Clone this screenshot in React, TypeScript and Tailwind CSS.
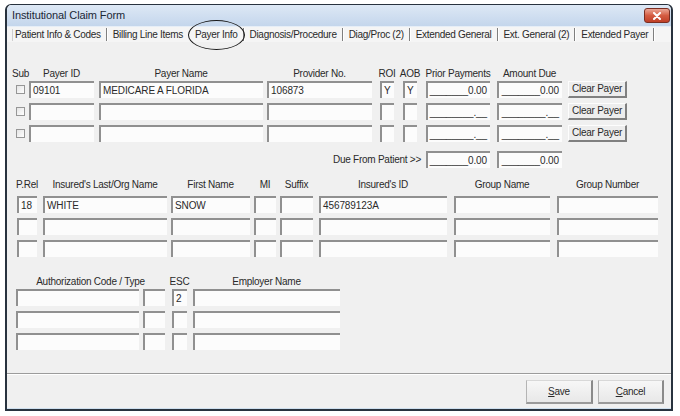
import React from "react";

type Col = { w: string; ml: string };

const s1: Col[] = [
  { w: "w-[9px]", ml: "ml-[9px]" },
  { w: "w-[65px]", ml: "ml-[4px]" },
  { w: "w-[164px]", ml: "ml-[5px]" },
  { w: "w-[105px]", ml: "ml-[4px]" },
  { w: "w-[14px]", ml: "ml-[8px]" },
  { w: "w-[14px]", ml: "ml-[9px]" },
  { w: "w-[64px]", ml: "ml-[9px]" },
  { w: "w-[65px]", ml: "ml-[7px]" },
  { w: "w-[59px]", ml: "ml-[6px]" },
];

const s2: Col[] = [
  { w: "w-[20px]", ml: "ml-[10px]" },
  { w: "w-[124px]", ml: "ml-[6px]" },
  { w: "w-[79px]", ml: "ml-[4px]" },
  { w: "w-[22px]", ml: "ml-[4px]" },
  { w: "w-[33px]", ml: "ml-[4px]" },
  { w: "w-[128px]", ml: "ml-[6px]" },
  { w: "w-[96px]", ml: "ml-[7px]" },
  { w: "w-[101px]", ml: "ml-[7px]" },
];

const s3: Col[] = [
  { w: "w-[123px]", ml: "ml-[9px]" },
  { w: "w-[22px]", ml: "ml-[4px]" },
  { w: "w-[15px]", ml: "ml-[7px]" },
  { w: "w-[147px]", ml: "ml-[6px]" },
];

function Field({ col, v, right }: { col: Col; v?: string; right?: boolean }) {
  return (
    <div
      className={`${col.w} ${col.ml} h-[17px] shrink-0 bg-[#fcfcfc] border-t-2 border-l-2 border-t-[#909090] border-l-[#909090] ${
        right ? "text-right pr-[3px]" : "pl-[2px]"
      } text-[10px] leading-[15px] text-[#2a2a2a] tracking-[-0.1px] whitespace-nowrap overflow-hidden`}
    >
      {v}
    </div>
  );
}

function Head({ col, text }: { col: Col; text: string }) {
  return (
    <div className={`${col.w} ${col.ml} shrink-0 flex justify-center`}>
      <span className="whitespace-nowrap">{text}</span>
    </div>
  );
}

function Check({ col }: { col: Col }) {
  return (
    <div className={`${col.w} ${col.ml} h-[17px] shrink-0 flex items-center justify-center`}>
      <div className="w-[9px] h-[9px] shrink-0 border border-[#969696] bg-linear-to-br from-[#e4e4e4] to-[#ffffff]" />
    </div>
  );
}

function ClearBtn({ col }: { col: Col }) {
  return (
    <div
      className={`${col.w} ${col.ml} h-[17px] shrink-0 flex items-center justify-center bg-[#ededed] border-t border-l border-t-[#fdfdfd] border-l-[#fdfdfd] border-r-2 border-b-2 border-r-[#808080] border-b-[#808080] text-[10px] leading-[12px] whitespace-nowrap`}
    >
      Clear Payer
    </div>
  );
}

const MASK_FILLED = "_______0.00";
const MASK_EMPTY = "________.__";

function Sep({ hidden }: { hidden?: boolean }) {
  return (
    <span
      className={`w-[2px] h-[13px] shrink-0 ${
        hidden ? "" : "border-l border-l-[#7f7f7f] border-r border-r-white"
      }`}
    />
  );
}

const tabs = [
  "Patient Info & Codes",
  "Billing Line Items",
  "Payer Info",
  "Diagnosis/Procedure",
  "Diag/Proc (2)",
  "Extended General",
  "Ext. General (2)",
  "Extended Payer",
];

export default function App() {
  const payerRows = [
    { id: "09101", name: "MEDICARE A FLORIDA", prov: "106873", roi: "Y", aob: "Y", prior: MASK_FILLED, amt: MASK_FILLED },
    { id: "", name: "", prov: "", roi: "", aob: "", prior: MASK_EMPTY, amt: MASK_EMPTY },
    { id: "", name: "", prov: "", roi: "", aob: "", prior: MASK_EMPTY, amt: MASK_EMPTY },
  ];
  const insRows = [
    ["18", "WHITE", "SNOW", "", "", "456789123A", "", ""],
    ["", "", "", "", "", "", "", ""],
    ["", "", "", "", "", "", "", ""],
  ];
  const authRows = [
    ["", "", "2", ""],
    ["", "", "", ""],
    ["", "", "", ""],
  ];

  return (
    <div className={`w-[680px] h-[416px] bg-white pt-[4px] pl-[5px] font-['Liberation_Sans',Arial,sans-serif] text-[10px] tracking-[-0.25px] text-[#2a2a2a]`}>
      <div className="relative w-[668px] h-[407px] flex flex-col border-t border-l-2 border-r-2 border-b-2 border-[#28323e] rounded-t-[6px] bg-[#f0f0f0]">
        {/* Title bar */}
        <div className="h-[21px] shrink-0 flex items-start bg-linear-to-b from-[#dde8f5] to-[#c4d6ec] rounded-t-[5px]">
          <span className="ml-[5px] mt-[3px] text-[11px] leading-[14px] tracking-[-0.1px] text-[#1b2836]">
            Institutional Claim Form
          </span>
          <div className="ml-auto mr-[1px] mt-[3px] w-[26px] h-[15px] rounded-[3px] border border-[#7a2e22] bg-linear-to-b from-[#eaa696] via-[#d45c42] to-[#bf3f27] flex items-center justify-center">
            <svg width="10" height="8" viewBox="0 0 10 8">
              <path d="M2 1 L8 7 M8 1 L2 7" stroke="#ffffff" strokeWidth="2" strokeLinecap="round" />
            </svg>
          </div>
        </div>

        {/* Tab row */}
        <div className="h-[16px] shrink-0 flex items-center pl-[5px] bg-[#f5f5f5] border-t border-t-[#e6eef7] tracking-[-0.3px]">
          <span className="w-[1px] h-[12px] bg-[#cfcfcf] shrink-0" />
          {tabs.map((t, i) => (
            <React.Fragment key={t}>
              <span className={`${i === 0 ? "pl-[2px]" : "pl-[5px]"} pr-[5px] whitespace-nowrap leading-[12px]`}>{t}</span>
              <Sep hidden={i === 1} />
            </React.Fragment>
          ))}
        </div>

        {/* Content */}
        <div className="h-[331px] shrink-0 flex flex-col pt-[26px]">
          {/* Section 1 header */}
          <div className="flex leading-[12px]">
            <Head col={s1[0]} text="Sub" />
            <Head col={s1[1]} text="Payer ID" />
            <Head col={s1[2]} text="Payer Name" />
            <Head col={s1[3]} text="Provider No." />
            <Head col={s1[4]} text="ROI" />
            <Head col={s1[5]} text="AOB" />
            <Head col={s1[6]} text="Prior Payments" />
            <Head col={s1[7]} text="Amount Due" />
          </div>
          <div className="flex flex-col gap-[5px] mt-[1px]">
            {payerRows.map((r, i) => (
              <div key={i} className="flex">
                <Check col={s1[0]} />
                <Field col={s1[1]} v={r.id} />
                <Field col={s1[2]} v={r.name} />
                <Field col={s1[3]} v={r.prov} />
                <Field col={s1[4]} v={r.roi} />
                <Field col={s1[5]} v={r.aob} />
                <Field col={s1[6]} v={r.prior} right />
                <Field col={s1[7]} v={r.amt} right />
                <ClearBtn col={s1[8]} />
              </div>
            ))}
          </div>
          <div className="flex mt-[9px]">
            <div className="w-[414px] h-[17px] shrink-0 flex items-center justify-end">
              <span className="whitespace-nowrap">Due From Patient &gt;&gt;</span>
            </div>
            <Field col={{ w: "w-[64px]", ml: "ml-[5px]" }} v={MASK_FILLED} right />
            <Field col={s1[7]} v={MASK_FILLED} right />
          </div>

          {/* Section 2 */}
          <div className="flex leading-[12px] mt-[11px]">
            <Head col={s2[0]} text="P.Rel" />
            <Head col={s2[1]} text="Insured's Last/Org Name" />
            <Head col={s2[2]} text="First Name" />
            <Head col={s2[3]} text="MI" />
            <Head col={s2[4]} text="Suffix" />
            <Head col={s2[5]} text="Insured's ID" />
            <Head col={s2[6]} text="Group Name" />
            <Head col={s2[7]} text="Group Number" />
          </div>
          <div className="flex flex-col gap-[5px] mt-[5px]">
            {insRows.map((r, i) => (
              <div key={i} className="flex">
                {r.map((v, j) => (
                  <Field key={j} col={s2[j]} v={v} />
                ))}
              </div>
            ))}
          </div>

          {/* Section 3 */}
          <div className="flex leading-[12px] mt-[19px]">
            <Head col={{ w: "w-[149px]", ml: "ml-[9px]" }} text="Authorization Code / Type" />
            <Head col={s3[2]} text="ESC" />
            <Head col={s3[3]} text="Employer Name" />
          </div>
          <div className="flex flex-col gap-[5px] mt-[1px]">
            {authRows.map((r, i) => (
              <div key={i} className="flex">
                {r.map((v, j) => (
                  <Field key={j} col={s3[j]} v={v} />
                ))}
              </div>
            ))}
          </div>
        </div>

        {/* Separator */}
        <div className="h-[2px] shrink-0 border-t border-t-[#9c9c9c] border-b border-b-white" />

        {/* Buttons */}
        <div className="h-[33px] shrink-0 flex items-start justify-end pt-[5px] pr-[7px] gap-[5px]">
          <div className="w-[67px] h-[24px] flex items-center justify-center bg-linear-to-b from-[#f7f7f7] to-[#e8e8e8] border-l border-t border-l-[#b4b4b4] border-t-[#d8d8d8] border-r-2 border-b-2 border-r-[#8a8a8a] border-b-[#9a9a9a] text-[10px]">
            <span>
              <span className="underline">S</span>ave
            </span>
          </div>
          <div className="w-[66px] h-[24px] flex items-center justify-center bg-linear-to-b from-[#f7f7f7] to-[#e8e8e8] border-l border-t border-l-[#b4b4b4] border-t-[#d8d8d8] border-r-2 border-b-2 border-r-[#8a8a8a] border-b-[#9a9a9a] text-[10px]">
            <span>
              <span className="underline">C</span>ancel
            </span>
          </div>
        </div>
        <div className="h-[1px] shrink-0 bg-[#cfe0ef]" />

        {/* Annotation ellipse */}
        <div className="absolute left-[181px] top-[15px] w-[57px] h-[30px] rounded-[50%] border-[1.5px] border-[#1a1a1a]" />
      </div>
    </div>
  );
}
